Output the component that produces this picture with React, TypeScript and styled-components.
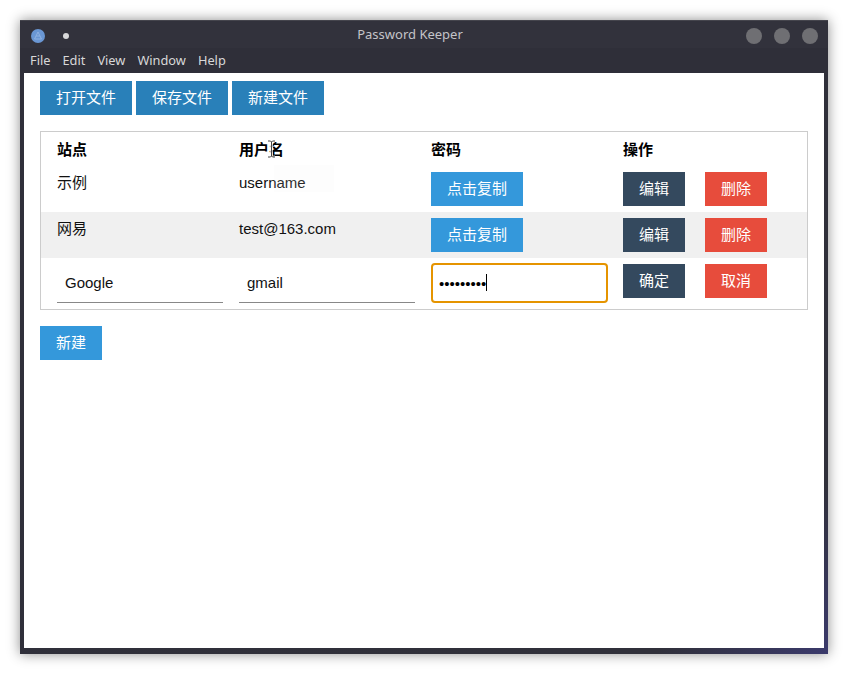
import React from 'react'
import styled, { createGlobalStyle } from 'styled-components'

const cjk = `"Liberation Sans", "Noto Sans CJK SC", sans-serif`

type Account = { site: string; user: string }

const accounts: Account[] = [
  { site: '示例', user: 'username' },
  { site: '网易', user: 'test@163.com' },
]

const menus = ['File', 'Edit', 'View', 'Window', 'Help']

const App: React.FC = () => {
  return (
    <>
      <GlobalStyle />
      <Desktop>
        <Frame>
          <TitleBar>
            <AppIcon>
              <svg width="14" height="14" viewBox="0 0 14 14">
                <circle cx="7" cy="7" r="7" fill="#6a97d4" />
                <path d="M7 3 L10.5 10 H3.5 Z M5 7 H9" fill="none" stroke="#8fb2e2" strokeWidth="1" />
              </svg>
            </AppIcon>
            <PinDot />
            <Title>Password Keeper</Title>
            <WindowButtons>
              <WindowButton />
              <WindowButton />
              <WindowButton />
            </WindowButtons>
          </TitleBar>
          <MenuBar>
            {menus.map((m) => (
              <MenuItem key={m}>{m}</MenuItem>
            ))}
          </MenuBar>
          <Content>
            <Toolbar>
              <ToolButton>打开文件</ToolButton>
              <ToolButton>保存文件</ToolButton>
              <ToolButton>新建文件</ToolButton>
            </Toolbar>
            <Table>
              <HeaderCell $first>站点</HeaderCell>
              <HeaderCell>
                用户名
                <TextCursor width="9" height="18" viewBox="0 0 9 18">
                  <path d="M1 1 H3.5 L4.5 2 L5.5 1 H8 M4.5 2 V16 M1 17 H3.5 L4.5 16 L5.5 17 H8" fill="none" stroke="#fff" strokeWidth="3" opacity="0.7" />
                  <path d="M1 1 H3.5 L4.5 2 L5.5 1 H8 M4.5 2 V16 M1 17 H3.5 L4.5 16 L5.5 17 H8" fill="none" stroke="#444" strokeWidth="1" />
                </TextCursor>
              </HeaderCell>
              <HeaderCell>密码</HeaderCell>
              <HeaderCell>操作</HeaderCell>
              {accounts.map((a, i) => (
                <Row key={a.site} $striped={i % 2 === 1}>
                  <Cell $first>{a.site}</Cell>
                  <Cell>{a.user}</Cell>
                  <Cell>
                    <Button $color="#3498db" $wide>
                      点击复制
                    </Button>
                  </Cell>
                  <Actions>
                    <Button $color="#34495e">编辑</Button>
                    <Button $color="#e74c3c">删除</Button>
                  </Actions>
                </Row>
              ))}
              <Row>
                <InputCell $first>
                  <TextInput readOnly value="Google" />
                </InputCell>
                <InputCell>
                  <TextInput readOnly value="gmail" />
                </InputCell>
                <PasswordCell>
                  <PasswordBox>
                    <PasswordInput readOnly type="password" value="123456789" />
                    <Caret />
                  </PasswordBox>
                </PasswordCell>
                <Actions>
                  <Button $color="#34495e">确定</Button>
                  <Button $color="#e74c3c">取消</Button>
                </Actions>
              </Row>
            </Table>
            <Button $color="#3498db">新建</Button>
            <DragGhost />
          </Content>
        </Frame>
      </Desktop>
    </>
  )
}

export default App

const GlobalStyle = createGlobalStyle`
  html, body {
    margin: 0;
    padding: 0;
    background: #fff;
  }
`

const Desktop = styled.div`
  width: 848px;
  height: 674px;
  box-sizing: border-box;
  padding: 20px;
`

const Frame = styled.div`
  width: 808px;
  height: 634px;
  display: flex;
  flex-direction: column;
  background: linear-gradient(135deg, #2f2f3a 0%, #30303a 88%, #3b3a6c 100%);
  box-shadow: 0 0 12px rgba(0, 0, 0, 0.45);
  border-top: 1px solid #45454d;
  box-sizing: border-box;
  padding-bottom: 6px;
`

const TitleBar = styled.div`
  position: relative;
  height: 27px;
  flex: none;
  display: flex;
  align-items: center;
  padding: 0 10px 0 11px;
  background: #32323c;
  font-family: "Noto Sans", sans-serif;
`

const AppIcon = styled.div`
  width: 14px;
  height: 14px;
  display: flex;
  margin-top: 2px;
`

const PinDot = styled.div`
  width: 6px;
  height: 6px;
  border-radius: 50%;
  background: #d8d8da;
  margin: 2px 0 0 18px;
`

const Title = styled.div`
  position: absolute;
  left: 0;
  right: 28px;
  top: 3px;
  text-align: center;
  color: #c4c4c8;
  font-size: 13px;
  line-height: 20px;
`

const WindowButtons = styled.div`
  display: flex;
  gap: 12px;
  margin-left: auto;
  margin-top: 2px;
`

const WindowButton = styled.div`
  width: 16px;
  height: 16px;
  border-radius: 50%;
  background: #6f6f73;
`

const MenuBar = styled.div`
  height: 25px;
  flex: none;
  display: flex;
  align-items: center;
  gap: 12px;
  padding-left: 10px;
  background: #2f2f39;
  font-family: "Noto Sans", sans-serif;
  font-size: 12.8px;
  color: #d8d8d8;
`

const MenuItem = styled.span`
  line-height: 25px;
`

const Content = styled.div`
  position: relative;
  flex: 1;
  margin: 0 4px;
  padding: 8px 16px 0;
  background: #fff;
  font-family: ${cjk};
  font-size: 15px;
  color: #111;
`

const Toolbar = styled.div`
  display: flex;
  gap: 4px;
  margin-bottom: 16px;
`

const ToolButton = styled.button`
  width: 92px;
  height: 34px;
  padding: 0 0 3px;
  border: none;
  background: #2980b9;
  color: #fff;
  font-family: ${cjk};
  font-size: 15px;
`

const Table = styled.div`
  display: grid;
  grid-template-columns: 198px 192px 192px 1fr;
  width: 768px;
  box-sizing: border-box;
  border: 1px solid #ccc;
  margin-bottom: 16px;
`

const HeaderCell = styled.div<{ $first?: boolean }>`
  position: relative;
  height: 34px;
  line-height: 35px;
  padding-left: ${(p) => (p.$first ? '16px' : '0')};
  font-weight: 700;
  color: #000;
`

const Row = styled.div<{ $striped?: boolean }>`
  grid-column: 1 / -1;
  display: grid;
  grid-template-columns: subgrid;
  background: ${(p) => (p.$striped ? '#f0f0f0' : 'transparent')};
`

const Cell = styled.div<{ $first?: boolean }>`
  height: 46px;
  box-sizing: border-box;
  padding-top: 6px;
  line-height: 22px;
  padding-left: ${(p) => (p.$first ? '16px' : '0')};
`

const Actions = styled.div`
  display: flex;
  gap: 20px;
  padding-top: 6px;
  align-items: flex-start;
`

const Button = styled.button<{ $color: string; $wide?: boolean }>`
  display: block;
  width: ${(p) => (p.$wide ? '92px' : '62px')};
  height: 34px;
  padding: 0 0 3px;
  border: none;
  background: ${(p) => p.$color};
  color: #fff;
  font-family: ${cjk};
  font-size: 15px;
`

const InputCell = styled.div<{ $first?: boolean }>`
  height: 51px;
  box-sizing: border-box;
  padding: 6px 0 6px ${(p) => (p.$first ? '16px' : '0')};
  width: ${(p) => (p.$first ? '182px' : '176px')};
`

const TextInput = styled.input`
  display: block;
  width: 100%;
  height: 39px;
  box-sizing: border-box;
  padding: 0 8px 2px;
  border: none;
  border-bottom: 1px solid #888;
  outline: none;
  background: transparent;
  font-family: ${cjk};
  font-size: 15px;
  color: #111;
`

const PasswordCell = styled.div`
  padding-top: 5px;
`

const PasswordBox = styled.div`
  position: relative;
  width: 177px;
  height: 40px;
  box-sizing: border-box;
  border: 2px solid #e59400;
  border-radius: 4px;
`

const PasswordInput = styled.input`
  display: block;
  width: 100%;
  height: 100%;
  box-sizing: border-box;
  padding: 0 6px;
  border: none;
  outline: none;
  background: transparent;
  font-family: ${cjk};
  font-size: 15px;
  color: #000;
`

const Caret = styled.div`
  position: absolute;
  left: 53px;
  top: 9px;
  width: 1px;
  height: 17px;
  background: #000;
`

const TextCursor = styled.svg`
  position: absolute;
  left: 28px;
  top: 8px;
`

const DragGhost = styled.div`
  position: absolute;
  left: 250px;
  top: 92px;
  width: 60px;
  height: 27px;
  background: rgba(240, 240, 240, 0.12);
`
